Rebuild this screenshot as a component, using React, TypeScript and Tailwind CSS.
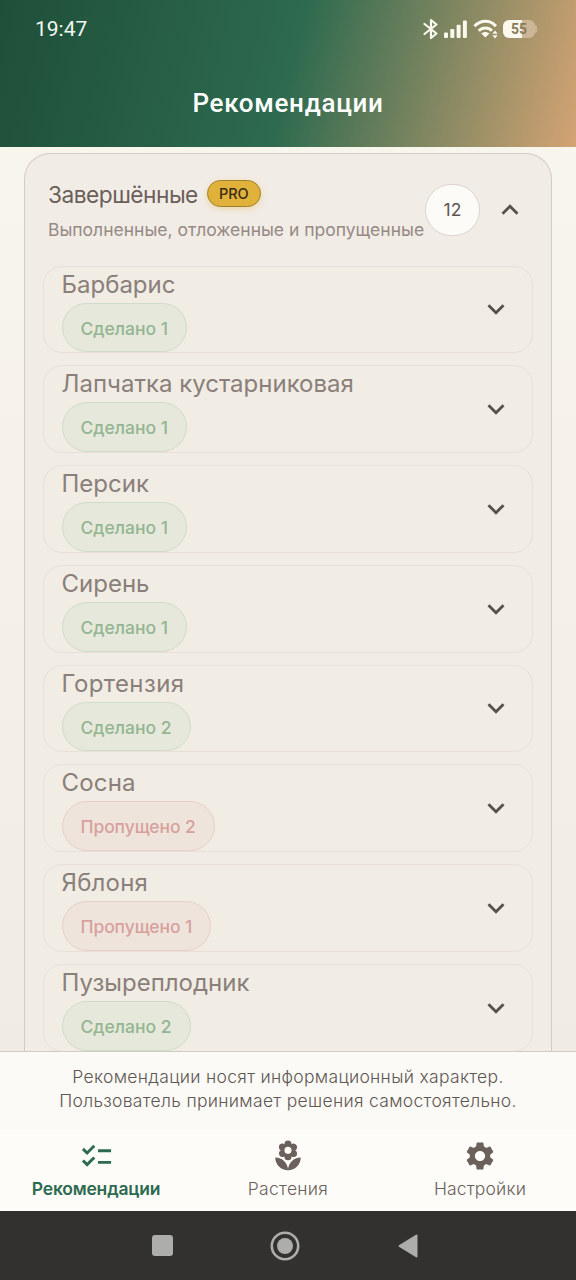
import clsx from 'clsx';
import { MdChecklist, MdExpandLess, MdExpandMore, MdLocalFlorist, MdSettings } from 'react-icons/md';

type Status = 'done' | 'skipped';

interface Plant {
  name: string;
  status: Status;
  count: number;
  nameClass?: string;
}

const plants: Plant[] = [
  { name: 'Барбарис', status: 'done', count: 1 },
  { name: 'Лапчатка кустарниковая', status: 'done', count: 1 },
  { name: 'Персик', status: 'done', count: 1 },
  { name: 'Сирень', status: 'done', count: 1 },
  { name: 'Гортензия', status: 'done', count: 2, nameClass: 'tracking-[0.4px]' },
  { name: 'Сосна', status: 'skipped', count: 2, nameClass: 'tracking-[0.2px]' },
  { name: 'Яблоня', status: 'skipped', count: 1, nameClass: 'tracking-[0.2px]' },
  { name: 'Пузыреплодник', status: 'done', count: 2 },
];

function StatusBar() {
  return (
    <div className="flex h-[58px] items-center justify-between pl-[35px] pr-[39px]">
      <span className="font-['Roboto'] text-[21px] leading-none text-[#f4f8f2]">19:47</span>
      <div className="flex items-center text-[#fbf8ee]">
        <svg className="mr-[5px]" width="16" height="22" viewBox="0 0 16 22" fill="none" stroke="currentColor" strokeWidth="2.2">
          <path d="M1.5 6L13.5 15.5L8 20V2L13.5 6.5L1.5 16" strokeLinejoin="round" strokeLinecap="round" />
        </svg>
        <svg width="24" height="18" viewBox="0 0 24 18" fill="currentColor">
          <rect x="0" y="12.5" width="4" height="5.5" rx="1" />
          <rect x="6.3" y="9" width="4" height="9" rx="1" />
          <rect x="12.6" y="4.8" width="4" height="13.2" rx="1" />
          <rect x="18.9" y="0.5" width="4" height="17.5" rx="1" />
        </svg>
        <svg className="ml-[5px]" width="26" height="20" viewBox="0 0 26 20" fill="none">
          <path d="M1.5 7.3C7.6 0.6 17.4 0.6 23 7.3" stroke="currentColor" strokeWidth="3" />
          <path d="M5.7 11.8C9.4 7.9 15.4 7.9 19 11.8" stroke="currentColor" strokeWidth="3" />
          <path d="M8.3 14.4C10.7 12.4 14 12.4 16.4 14.4L12.4 18.6Z" fill="currentColor" />
          <path d="M19.3 14.8L22 11.6L24.7 14.8ZM19.3 16.2H24.7L22 19.4Z" fill="currentColor" />
        </svg>
        <div className="ml-[4px] flex items-center">
          <div className="flex h-[18px] w-[32px] items-center justify-center rounded-[6px] bg-linear-to-r from-[#fbf8ee] from-58% to-[#cdb698] to-58% font-['Roboto'] text-[14px] font-bold leading-none text-[#877a5a]">
            55
          </div>
          <div className="h-[8px] w-[2px] rounded-r-full bg-[#cdb698]" />
        </div>
      </div>
    </div>
  );
}

function StatusChip({ status, count }: { status: Status; count: number }) {
  return (
    <span
      className={clsx(
        'flex h-[50px] w-fit items-center rounded-full border-[1.5px] px-[18px] pt-[2px] text-[17.5px] font-medium leading-none whitespace-nowrap',
        status === 'done'
          ? 'border-[#cfdcc9] bg-[#e6e8db] text-[#94b591]'
          : 'border-[#e9cfc8] bg-[#efe4db] tracking-[-0.1px] text-[#d6a19d]',
      )}
    >
      {status === 'done' ? 'Сделано' : 'Пропущено'} {count}
    </span>
  );
}

function PlantCard({ plant }: { plant: Plant }) {
  return (
    <div className="flex h-[87.75px] shrink-0 items-center justify-between rounded-[19px] border-[1.5px] border-[#eadfd8] bg-[#f1ece4] pl-[18px] pr-[19px]">
      <div className="flex h-full flex-col">
        <span className={clsx('h-[36px] text-[24px] leading-[36px] whitespace-nowrap text-[#8a7f7a]', plant.nameClass)}>
          {plant.name}
        </span>
        <StatusChip status={plant.status} count={plant.count} />
      </div>
      <MdExpandMore className="h-[34px] w-[34px] text-[#5a504b]" />
    </div>
  );
}

function CompletedPanel() {
  return (
    <section className="ml-[23.5px] mr-[24px] mt-[5.5px] rounded-t-[26px] border-[1.5px] border-b-0 border-[#d6cbc4] bg-[#f2ece6] px-[18px]">
      <div className="flex h-[112px] items-center justify-between pl-[5.5px]">
        <div className="pt-[3.5px]">
          <div className="flex items-center gap-[9px]">
            <h2 className="text-[22.7px] leading-[34px] tracking-[-0.5px] whitespace-nowrap text-[#6b5f5a]">Завершённые</h2>
            <span className="-mt-[2px] flex h-[27px] w-[54px] items-center justify-center rounded-full border-[1.5px] border-[#a07f28] bg-[#e0b23b] text-[14.5px] font-medium text-[#3a2c14] shadow-[0_2px_6px_rgba(224,178,59,0.35)]">
              PRO
            </span>
          </div>
          <p className="mt-[3px] text-[17.5px] leading-[30px] whitespace-nowrap text-[#958a85]">
            Выполненные, отложенные и пропущенные
          </p>
        </div>
        <div className="flex items-center gap-[13px] pr-[6px]">
          <span className="flex h-[52px] w-[55px] items-center justify-center rounded-full border-[1.5px] border-[#ddd5cf] bg-[#fcfbf7] pt-[2px] text-[17.5px] text-[#5f5551]">
            12
          </span>
          <MdExpandLess className="h-[34px] w-[34px] text-[#5a504b]" />
        </div>
      </div>
      <div className="flex flex-col gap-3">
        {plants.map((plant) => (
          <PlantCard key={plant.name} plant={plant} />
        ))}
      </div>
    </section>
  );
}

function BottomNav() {
  return (
    <nav className="grid h-[82px] shrink-0 grid-cols-3 bg-[#fdfcf8] text-[17.5px] leading-6 text-[#6b605b]">
      <div className="flex flex-col items-center pt-[10px] font-semibold tracking-[-0.2px] text-[#2d6a4f]">
        <MdChecklist className="h-[35px] w-[35px]" />
        <span className="mt-[3px]">Рекомендации</span>
      </div>
      <div className="flex flex-col items-center pt-[10px] font-[350] tracking-[0.3px]">
        <MdLocalFlorist className="h-[34px] w-[34px]" />
        <span className="mt-[4px]">Растения</span>
      </div>
      <div className="flex flex-col items-center pt-[10px] font-[350] tracking-[0.15px]">
        <MdSettings className="h-[34px] w-[34px]" />
        <span className="mt-[4px]">Настройки</span>
      </div>
    </nav>
  );
}

function SystemBar() {
  return (
    <div className="flex h-[69px] shrink-0 items-center bg-[#32312f] pl-[152px] text-[#adadab]">
      <div className="h-[21px] w-[21px] rounded-[3px] bg-[#adadab]" />
      <svg className="ml-[97px]" width="30" height="30" viewBox="0 0 30 30">
        <circle cx="15" cy="15" r="13.2" fill="none" stroke="currentColor" strokeWidth="2.6" />
        <circle cx="15" cy="15" r="8" fill="currentColor" />
      </svg>
      <svg className="ml-[97px]" width="22" height="26" viewBox="0 0 22 26">
        <path d="M19.5 2.5V23.5L2.5 13Z" fill="currentColor" stroke="currentColor" strokeWidth="2" strokeLinejoin="round" />
      </svg>
    </div>
  );
}

export default function App() {
  return (
    <div className="flex h-[1280px] w-[576px] flex-col overflow-hidden bg-[#f7f3eb] font-['Inter','Noto_Sans',sans-serif]">
      <header className="h-[147px] shrink-0 bg-[linear-gradient(104.3deg,#1f4f39_0%,#2d6a4f_50%,#d4a373_100%)]">
        <StatusBar />
        <h1 className="mt-[27px] text-center font-['Roboto'] text-[26px] font-medium leading-[36px] tracking-[0.7px] text-white">
          Рекомендации
        </h1>
      </header>
      <main className="min-h-0 flex-1 overflow-hidden bg-linear-to-b from-[#f8f5ed] to-[#f0ece4]">
        <CompletedPanel />
      </main>
      <div className="h-[78px] shrink-0 border-t-[1.5px] border-[#d0cbc5] bg-[#fbfaf6] pt-[13px] text-center text-[17.5px] font-light leading-[23.5px] tracking-[0.31px] text-[#5f5753]">
        <p>Рекомендации носят информационный характер.</p>
        <p>Пользователь принимает решения самостоятельно.</p>
      </div>
      <BottomNav />
      <SystemBar />
    </div>
  );
}
